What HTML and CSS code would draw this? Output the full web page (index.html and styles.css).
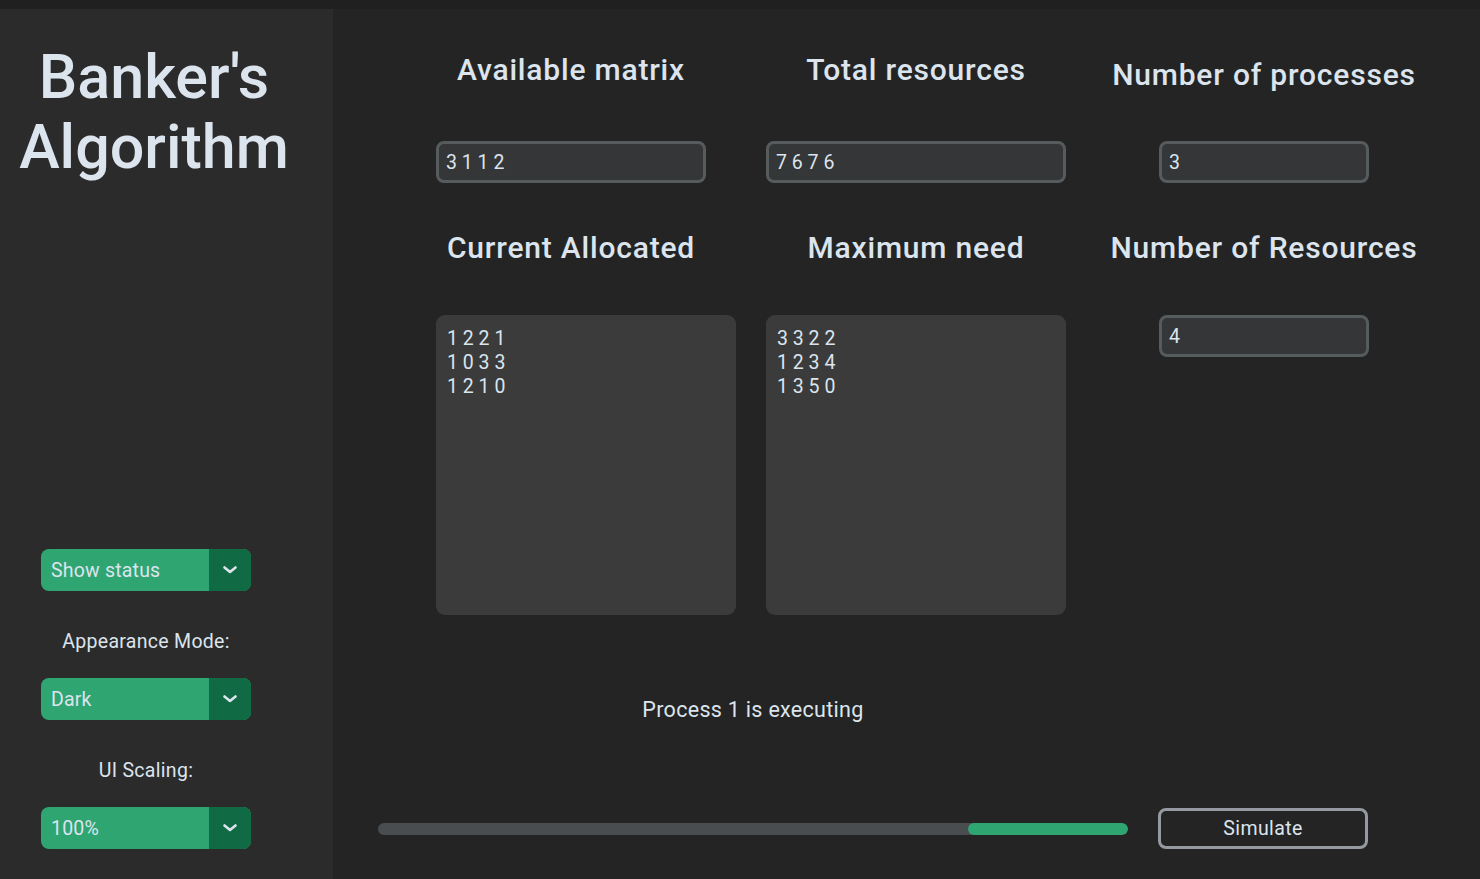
FILE: index.html
```html
<!DOCTYPE html>
<html lang="en">
<head>
<meta charset="utf-8">
<title>Banker's Algorithm</title>
<link rel="stylesheet" href="styles.css">
</head>
<body>
<div class="top-strip"></div>
<div class="app">
  <aside class="sidebar">
    <h1 class="title">Banker's<br>Algorithm</h1>
    <div class="controls">
      <div class="menu">
        <span class="menu-label">Show status</span>
        <span class="menu-arrow"><svg width="14" height="8" viewBox="0 0 14 8"><path d="M1.5 1.5 L7 6 L12.5 1.5" fill="none" stroke="#dce4ee" stroke-width="2.6" stroke-linecap="round" stroke-linejoin="round"/></svg></span>
      </div>
      <div class="side-label">Appearance Mode:</div>
      <div class="menu">
        <span class="menu-label">Dark</span>
        <span class="menu-arrow"><svg width="14" height="8" viewBox="0 0 14 8"><path d="M1.5 1.5 L7 6 L12.5 1.5" fill="none" stroke="#dce4ee" stroke-width="2.6" stroke-linecap="round" stroke-linejoin="round"/></svg></span>
      </div>
      <div class="side-label">UI Scaling:</div>
      <div class="menu">
        <span class="menu-label">100%</span>
        <span class="menu-arrow"><svg width="14" height="8" viewBox="0 0 14 8"><path d="M1.5 1.5 L7 6 L12.5 1.5" fill="none" stroke="#dce4ee" stroke-width="2.6" stroke-linecap="round" stroke-linejoin="round"/></svg></span>
      </div>
    </div>
  </aside>
  <main class="main">
    <div class="grid">
      <div class="heading">Available matrix</div>
      <div class="heading">Total resources</div>
      <div class="heading heading-low">Number of processes</div>

      <div class="entry entry-md">3 1 1 2</div>
      <div class="entry entry-lg">7 6 7 6</div>
      <div class="entry entry-sm">3</div>

      <div class="heading">Current Allocated</div>
      <div class="heading">Maximum need</div>
      <div class="heading">Number of Resources</div>

      <div class="textbox textbox-end">1 2 2 1
1 0 3 3
1 2 1 0</div>
      <div class="textbox">3 3 2 2
1 2 3 4
1 3 5 0</div>
      <div class="entry entry-sm entry-top">4</div>
    </div>
    <div class="status">Process 1 is executing</div>
    <div class="bottom">
      <div class="progress"><div class="progress-fill" style="width:160px"></div></div>
      <button class="simulate">Simulate</button>
    </div>
  </main>
</div>
</body>
</html>
```

FILE: styles.css
```css
* { box-sizing: border-box; }

html, body {
  margin: 0;
  padding: 0;
}

body {
  width: 1480px;
  height: 879px;
  overflow: hidden;
  background: #202020;
  font-family: Roboto, "Liberation Sans", sans-serif;
  color: #dce4ee;
  font-size: 19.5px;
  letter-spacing: 0.2px;
}

.top-strip {
  height: 9px;
}

.app {
  display: flex;
  height: 870px;
  background: #242424;
}

/* Sidebar */
.sidebar {
  width: 333px;
  flex: none;
  background: #2b2b2b;
  display: flex;
  flex-direction: column;
}

.title {
  margin: 33px 0 0 0;
  width: 308px;
  text-align: center;
  font-size: 61px;
  line-height: 70px;
  font-weight: 500;
  letter-spacing: 0;
}

.controls {
  margin-top: auto;
  margin-left: 41px;
  width: 210px;
  padding-bottom: 30px;
  display: flex;
  flex-direction: column;
}

.menu {
  height: 42px;
  display: flex;
  border-radius: 8px;
  overflow: hidden;
  background: #2fa572;
}

.menu-label {
  flex: 1;
  padding: 1px 0 0 10px;
  line-height: 42px;
}

.menu-arrow {
  width: 42px;
  background: #106a43;
  display: flex;
  align-items: center;
  justify-content: center;
}

.side-label {
  text-align: center;
  line-height: 28px;
  margin: 37px 0 22px;
  letter-spacing: 0.3px;
}

/* Main */
.main {
  flex: 1;
  display: flex;
  flex-direction: column;
}

.grid {
  display: grid;
  grid-template-columns: 330px 300px 336px;
  grid-template-rows: 122px 62px 109px auto;
  column-gap: 30px;
  padding-left: 73px;
}

.heading {
  font-size: 30px;
  line-height: 36px;
  text-align: center;
  white-space: nowrap;
  align-self: center;
  font-weight: 500;
  letter-spacing: 0.8px;
}

.heading-low {
  margin-top: 10px;
}

.entry {
  height: 42px;
  border: 3px solid #565b5e;
  border-radius: 8px;
  background: #343638;
  padding: 1px 0 0 7px;
  line-height: 35px;
  justify-self: center;
  align-self: center;
  white-space: pre;
  letter-spacing: 0;
}

.entry-md { width: 270px; }
.entry-lg { width: 300px; }
.entry-sm { width: 210px; }

.entry-top {
  align-self: start;
  margin-top: 13px;
}

.textbox {
  margin-top: 13px;
  width: 300px;
  height: 300px;
  background: #3b3b3b;
  border-radius: 9px;
  padding: 12px 11px 11px;
  line-height: 24px;
  white-space: pre;
  letter-spacing: 0;
}

.textbox-end {
  justify-self: end;
}

.status {
  margin: 83px 0 0 45px;
  width: 750px;
  text-align: center;
  line-height: 24px;
  font-size: 21.5px;
  letter-spacing: 0.3px;
}

.bottom {
  display: flex;
  align-items: center;
  margin: 86px 0 0 45px;
}

.progress {
  width: 750px;
  height: 12px;
  border-radius: 6px;
  background: #4a4d50;
  display: flex;
  justify-content: flex-end;
  overflow: hidden;
}

.progress-fill {
  height: 12px;
  border-radius: 6px;
  background: #2fa572;
}

.simulate {
  margin-left: 30px;
  width: 210px;
  height: 41px;
  border: 3px solid #949a9f;
  border-radius: 8px;
  background: transparent;
  color: #dce4ee;
  font-family: Roboto, "Liberation Sans", sans-serif;
  font-size: 19.5px;
  letter-spacing: 0.4px;
  padding: 0;
}
```
